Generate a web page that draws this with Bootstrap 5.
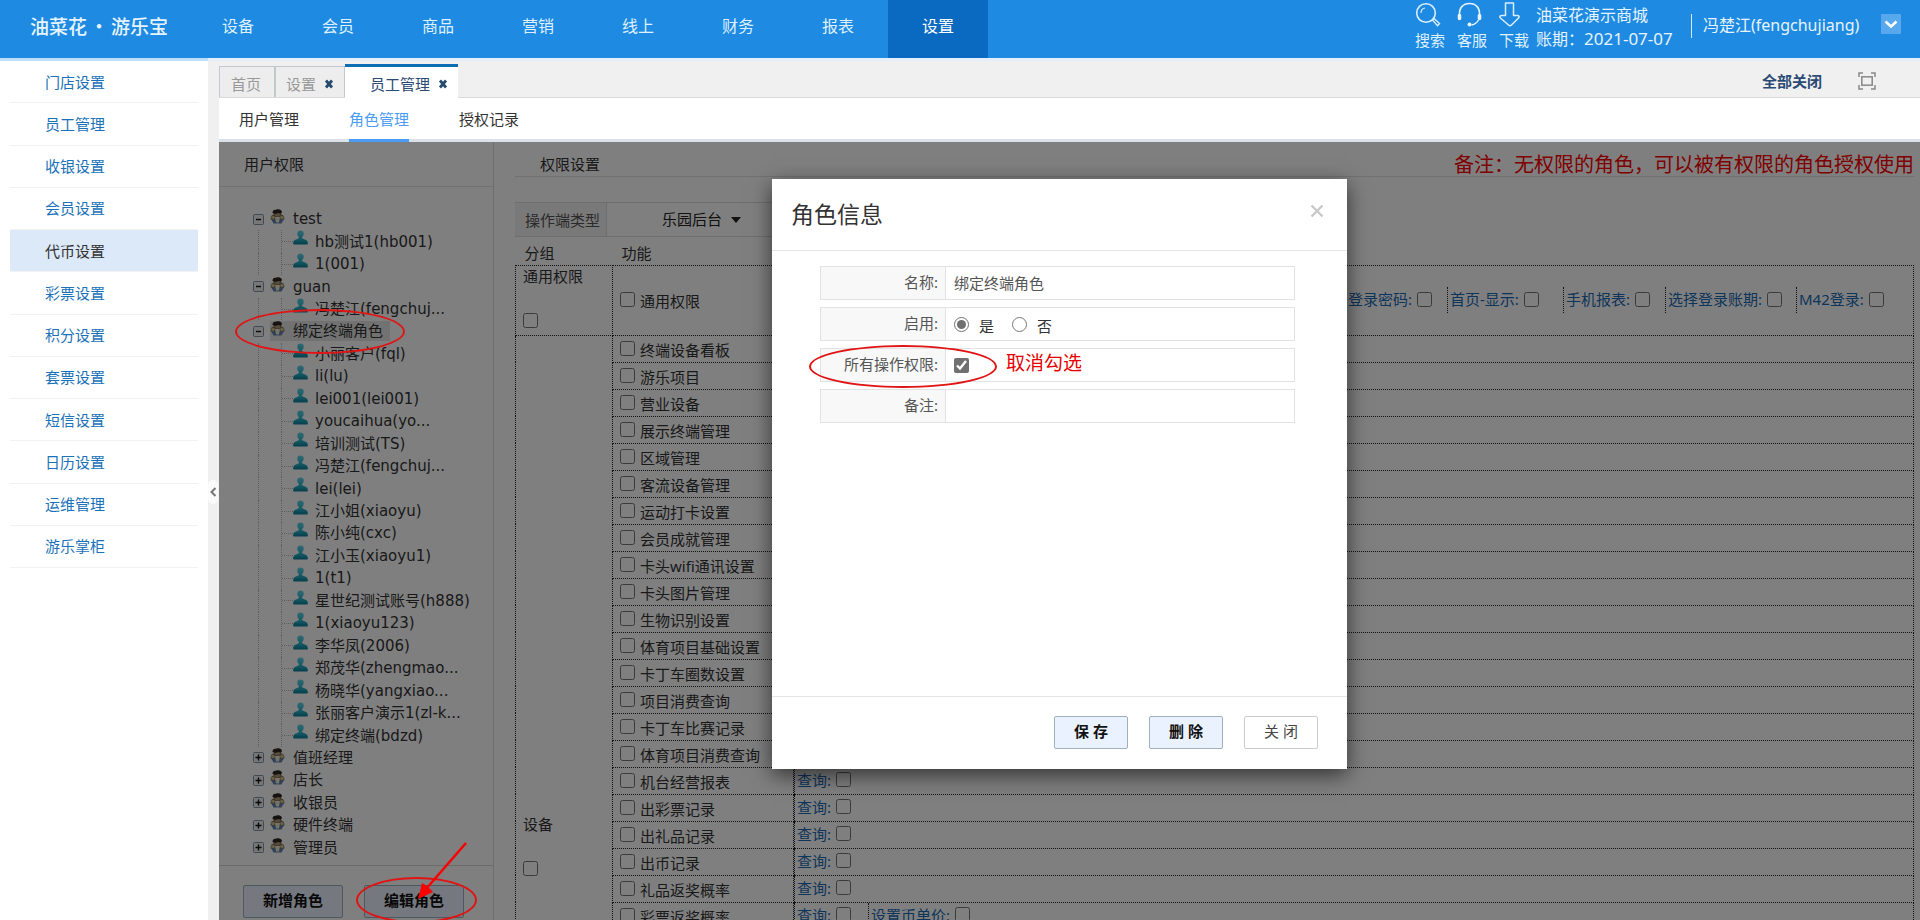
<!DOCTYPE html>
<html lang="zh-CN">
<head>
<meta charset="utf-8">
<meta name="viewport" content="width=device-width, initial-scale=1">
<title>员工管理 - 角色管理</title>
<link href="https://cdn.jsdelivr.net/npm/bootstrap@5.3.0/dist/css/bootstrap.min.css" rel="stylesheet">
<style>
  body { font: 15px/20px "Noto Sans", "Noto Sans CJK SC", sans-serif; color: #333; background: #f0f0f0; }
  a { text-decoration: none; }
  input[type=checkbox], input[type=radio] { width: 15px; height: 15px; margin: 0; flex: none; accent-color: #707070; }

  /* top bar */
  .topbar { height: 58px; background: #1e8ae2; color: #e6f4ff; font-size: 16px; flex: none; }
  .topbar a { color: #dff1ff; }
  .brand { width: 188px; padding-left: 30px; padding-bottom: 6px; font-size: 19px; line-height: 20px; font-weight: 500; font-family: "Noto Sans CJK SC", sans-serif; }
  .brand i { font-style: normal; width: 24px; text-align: center; }
  .mainnav a { width: 100px; text-align: center; line-height: 52px; }
  .mainnav a.current { background: #0a69c0; color: #fff; }
  .tools { padding-top: 2px; }
  .tools > a { width: 42px; font-size: 15px; }
  .tools svg { display: block; margin-bottom: 3px; }
  .shop { width: 155px; padding-top: 4px; line-height: 23px; margin-left: -5px; }
  .shop span { font-size: 17px; }
  .who { border-left: 1px solid #d5e9fa; height: 24px; line-height: 22px; padding-left: 11px; margin-top: 14px; width: 190px; }
  .drop { width: 20px; height: 20px; margin: 14px 19px 0 0; background: #57a8ec; border: 0; border-radius: 1px; }

  /* side menu */
  .sidemenu { width: 208px; border-top: 3px solid #bfe0f8; background: #fff; padding: 0 10px; }
  .sidemenu nav { display: grid; grid-auto-rows: 1fr; height: 507px; }
  .sidemenu a { color: #1b72b8; padding-left: 35px; border-bottom: 1px solid #f2f2f2; }
  .sidemenu a.current { background: #dbe9f9; color: #333; }
  .fold { width: 11px; border-top: 3px solid #e4eff9; }
  .fold button { width: 10px; height: 24px; background: #fafafa; border: 0; border-radius: 5px; margin-top: 419px; }

  /* tabs */
  .tabstrip { height: 40px; border-top: 3px solid #e4eff9; border-bottom: 1px solid #d8dadc; }
  .tabstrip .tab { height: 31px; border: 1px solid #c4c8cc; border-bottom: 0; color: #999; background: #ededed; padding: 3px 10px 0; }
  .tabstrip a.tab { padding: 3px 13px 0 11px; }
  .tabstrip .tab.current { height: 34px; border: 0; border-top: 3px solid #0d6db5; background: #fff; color: #2b4a74; padding: 2px 10px 0 25px; margin-bottom: -1px; }
  .tabstrip .shut { border: 0; background: none; padding: 0; line-height: 10px; }
  .closeall { color: #2b4a74; font-weight: 600; margin-right: 36px; }
  .fullscreen { margin-right: 44px; }
  .subnav { height: 44px; background: #fff; border-bottom: 3px solid #dbe1e8; padding-left: 20px; gap: 50px; }
  .subnav a { color: #333; height: 44px; line-height: 42px; }
  .subnav a.current { color: #4a9cf5; border-bottom: 3px solid #4a9cf5; }

  /* work area */
  .workarea { background: #fff; min-height: 0; }
  .rolepane { width: 275px; border-right: 1px solid #dcdcdc; }
  .rolepane h2 { font-size: 15px; line-height: 20px; padding: 12px 25px; margin: 0; border-bottom: 1px solid #e2e2e2; }
  .tree { display: grid; grid-auto-rows: 1fr; height: 651px; margin: 21px 0 6px 34px; font-family: "DejaVu Sans", "Noto Sans CJK SC", sans-serif; }
  .tree li { display: flex; align-items: center; }
  .tree .kid { border-left: 1px dotted #bbb; margin-left: 5px; padding-left: 22px; }
  .tree .kid::before { content: ""; height: 100%; border-left: 1px dotted #bbb; }
  .tree .twig { width: 11px; border-top: 1px dotted #bbb; }
  .tree .kid > svg { align-self: flex-start; }
  .tree .top { gap: 6px; }
  .tree .top > svg { flex: none; }
  .tree .picked { background: #e4e4e4; }
  .tree .lbl { padding: 0 7px 0 0; line-height: 20px; }
  .tree .kid .lbl { margin-left: 7px; }
  .rolebar { border-top: 1px solid #d5d5d5; padding: 19px 24px; gap: 21px; }
  .act { border: 1px solid #9fb0bf; border-radius: 2px; background: #ebf2ff; color: #111; font-weight: 700; height: 33px; line-height: 20px; padding: 0 0 3px; }
  .rolebar .act { width: 100px; }

  .rightpane { padding: 0 6px 0 21px; min-width: 0; }
  .rightpane h2 { font-size: 15px; line-height: 20px; margin: 0; padding-left: 25px; }
  .rolepane h2, .rightpane h2 { font-weight: 400; }
  .heading { border-bottom: 1px solid #e2e2e2; height: 35px; padding-top: 12px; }
  .hint { color: #f00; font-size: 20px; line-height: 22px; white-space: nowrap; }
  .client { margin-top: 25px; height: 35px; border-top: 1px solid #ddd; border-bottom: 1px solid #ddd; width: 560px; }
  .client label { background: #f3f3f3; width: 92px; padding-left: 10px; border-right: 1px solid #ddd; color: #555; }
  .client select { border: 0; background: none; appearance: none; width: 66px; margin-left: 55px; color: #222; padding: 0 0 2px; }
  .caret { border: 5px solid transparent; border-top: 6px solid #222; border-bottom: 0; margin-left: 3px; }

  .perm { width: 100%; table-layout: fixed; border-collapse: collapse; }
  .perm th { font-weight: 400; height: 28px; padding: 5px 0 1px 9px; line-height: 20px; }
  .perm td { border: 1px dotted #222; padding: 0; height: 27px; }
  .perm td.grp { padding: 0 0 7px 7px; }
  .perm .grp span { display: block; line-height: 20px; margin-bottom: 27px; }
  .perm .grp input { display: block; }
  .perm .fn { display: flex; gap: 5px; padding-left: 7px; height: 26px; }
  .perm .fn input { margin-top: 5px; }
  .perm .fn span { line-height: 20px; padding-top: 4px; }
  .ops { display: flex; color: #1b6bb5; }
  .ops label { display: flex; align-items: center; height: 26px; gap: 5px; padding: 0 0 2px 2px; border-left: 1px dotted #222; white-space: nowrap; }
  .ops .w-query { width: 74px; }
  .ops .w-price { width: 120px; }

  /* dialog */
  .shade { background: rgba(0,0,0,.5); z-index: 1; padding: 37px 20px 0 0; }
  .dialogbox { width: 575px; height: 590px; background: #fff; box-shadow: 0 6px 20px rgba(0,0,0,.6); }
  .dialogbox header { height: 72px; border-bottom: 1px solid #e5e5e5; padding: 0 23px 0 19px; }
  .dialogbox h1 { font-size: 23px; line-height: 30px; margin: 20px 0 0; font-weight: 400; }
  .dialogbox .x { border: 0; background: none; padding: 0; height: 14px; margin: 24px 0 0; line-height: 12px; }
  .dialogbox form { padding: 15px 52px 0 48px; gap: 7px; }
  .frow { height: 34px; border: 1px solid #e2e2e2; }
  .frow > .cap { width: 125px; background: #f8f8f8; border-right: 1px solid #e2e2e2; text-align: right; padding-right: 7px; line-height: 30px; color: #555; }
  .frow > .val { padding: 0 8px; }
  .frow input[type=text] { border: 0; width: 100%; padding: 0 8px 1px; color: #555; outline: 0; }
  .tip { color: #e60000; font-size: 19px; margin-left: 37px; line-height: 20px; padding-bottom: 4px; }
  .dialogbox footer { height: 73px; border-top: 1px solid #e5e5e5; padding: 19px 29px 0 0; gap: 21px; }
  .dialogbox footer .act { width: 74px; }
  .dialogbox footer .plain { background: #fff; font-weight: 400; color: #444; border-color: #ccc; }
  .mark-ring { position: absolute; border: 2px solid #e01414; border-radius: 50%; z-index: 2; pointer-events: none; }
  .ring-tree { left: -18px; top: -11px; width: 170px; height: 45px; }
  .ring-form { left: -12px; top: -4px; width: 188px; height: 43px; }
  .ring-btn { left: -8px; top: -8px; width: 121px; height: 46px; }
  .arrow { position: absolute; left: 50px; top: -44px; z-index: 2; pointer-events: none; }
</style>
</head>
<body class="vh-100 overflow-hidden d-flex flex-column">

<svg width="0" height="0" class="position-absolute">
  <defs>
    <linearGradient id="teal" x1="0" y1="0" x2="0" y2="1"><stop offset="0" stop-color="#62d3e4"/><stop offset=".6" stop-color="#2bb4ca"/><stop offset="1" stop-color="#0b7f96"/></linearGradient>
    <symbol id="user" viewBox="0 0 15 15">
      <path d="M7.500.5a3.200 3.200 0 0 1 3.200 3.300c0 1.500-.7 2.600-1.700 3.200 0 1.500 1.200 1.800 3 2.500 1.700.7 2.800 1.500 2.900 4 0 .6-.4.900-1 .9H1.100c-.6 0-1-.3-1-.9.1-2.500 1.200-3.300 2.900-4C4.800 8.800 6 8.500 6 7 5 6.400 4.300 5.300 4.300 3.800A3.200 3.200 0 0 1 7.500.5z" fill="url(#teal)"/>
    </symbol>
    <symbol id="role" viewBox="0 0 15 15">
      <path d="M1 7 4 5h7l3 2 .5 3-2 2L9 14H6l-3.500-2L.5 10z" fill="#77755e"/>
      <path d="M1.500 10.500h4l2 4H3.500zM13.500 10.500h-4l-2 4h4z" fill="#5f82b4"/>
      <path d="M5 8h5l-1 5.500H6z" fill="#eee6d0"/>
      <circle cx="3" cy="8.500" r="1.800" fill="#d3bd8e"/><circle cx="12" cy="8.500" r="1.800" fill="#d3bd8e"/>
      <circle cx="7.500" cy="4.800" r="2.700" fill="#b89470"/>
      <path d="M2.500 4c0-2 1-3.700 3.500-3.200C8-.2 11.800.3 12 3l-1.200 2-2-1-4 1z" fill="#2a2420"/>
    </symbol>
    <symbol id="minus" viewBox="0 0 11 11"><rect x=".5" y=".5" width="10" height="10" rx="1" fill="#eee" stroke="#8593a5"/><path d="M3 5.500h5" stroke="#111" stroke-width="1.400"/></symbol>
    <symbol id="plus" viewBox="0 0 11 11"><rect x=".5" y=".5" width="10" height="10" rx="1" fill="#eee" stroke="#8593a5"/><path d="M2.500 5.500h6M5.500 2.500v6" stroke="#111" stroke-width="1.400"/></symbol>
    <symbol id="cross" viewBox="0 0 10 10"><path d="M2 1.500 8 8.500M8 1.500 2 8.500" stroke="#244b6e" stroke-width="2.800"/></symbol>
  </defs>
</svg>

<div class="topbar d-flex">
  <div class="brand d-flex align-items-center"><span>油菜花</span><i>·</i><span>游乐宝</span></div>
  <nav class="mainnav d-flex">
    <a href="#">设备</a><a href="#">会员</a><a href="#">商品</a><a href="#">营销</a><a href="#">线上</a><a href="#">财务</a><a href="#">报表</a><a href="#" class="current">设置</a>
  </nav>
  <div class="tools d-flex ms-auto">
    <a href="#"><svg width="26" height="25" viewBox="0 0 26 25" fill="none" stroke="#d8eeff"><circle cx="11" cy="11" r="9.300" stroke-width="1.600"/><path d="M6 11a5 5 0 0 1 4-5" stroke-width="1.200"/><path d="m17.500 18 1.500-1.500 5.500 5-2 2.200z" stroke-width="1.400"/></svg>搜索</a>
    <a href="#"><svg width="26" height="25" viewBox="0 0 26 25" fill="none" stroke="#e6f4ff"><path d="M2.500 13C2 6 6 1.500 12.500 1.500S23 6 22.500 13" stroke-width="1.600"/><path d="M2.500 13.500v3M22.500 13.500v3" stroke-width="3.600" stroke-linecap="round"/><path d="M21.500 18c-1.500 3-4 4.500-7 5" stroke-width="1.400"/><circle cx="12.500" cy="22.500" r="2" fill="#e6f4ff" stroke="none"/></svg>客服</a>
    <a href="#"><svg width="22" height="25" viewBox="0 0 22 25" fill="none" stroke="#d8eeff" stroke-width="1.500" stroke-linejoin="round"><path d="M6.500 1h8v12.500h4c2 0 2 1.500.8 2.800L12.500 23c-.8.800-2.200.8-3 0L1.700 16.300C.5 15 .5 13.500 2.500 13.500h4z"/></svg>下载</a>
  </div>
  <div class="shop">油菜花演示商城<br>账期：<span>2021-07-07</span></div>
  <div class="who">冯楚江(fengchujiang)</div>
  <button class="drop p-0 d-flex align-items-center justify-content-center" aria-label="菜单"><svg width="14" height="9" viewBox="0 0 14 9" fill="none" stroke="#fff" stroke-width="2.600"><path d="m1.500 1.500 5.500 5 5.500-5"/></svg></button>
</div>

<div class="d-flex flex-grow-1" style="min-height:0">
  <aside class="sidemenu flex-shrink-0">
    <nav id="side"></nav>
  </aside>
  <div class="fold flex-shrink-0"><button class="p-0 d-flex align-items-center justify-content-center" aria-label="收起"><svg width="7" height="10" viewBox="0 0 7 10" fill="none" stroke="#777" stroke-width="2"><path d="M5.500 1 1.500 5l4 4"/></svg></button></div>

  <main class="flex-grow-1 d-flex flex-column" style="min-width:0">
    <div class="tabstrip d-flex align-items-end flex-shrink-0">
      <a href="#" class="tab d-flex align-items-center">首页</a>
      <div class="tab d-flex align-items-center gap-2">设置<button class="shut" aria-label="关闭设置"><svg width="10" height="10"><use href="#cross"/></svg></button></div>
      <div class="tab current d-flex align-items-center gap-2">员工管理<button class="shut" aria-label="关闭员工管理"><svg width="10" height="10"><use href="#cross"/></svg></button></div>
      <div class="ms-auto d-flex align-items-center align-self-center pt-1">
        <a href="#" class="closeall">全部关闭</a>
        <svg class="fullscreen" width="18" height="18" viewBox="0 0 18 18" fill="none" stroke="#888" stroke-width="1.500"><path d="M1 5V1h4M13 1h4v4M17 13v4h-4M5 17H1v-4"/><rect x="3.800" y="4.800" width="10.400" height="8.400"/></svg>
      </div>
    </div>
    <nav class="subnav d-flex flex-shrink-0">
      <a href="#">用户管理</a><a href="#" class="current">角色管理</a><a href="#">授权记录</a>
    </nav>

    <div class="workarea flex-grow-1 d-flex position-relative overflow-hidden">
      <section class="rolepane flex-shrink-0">
        <h2>用户权限</h2>
        <ul id="tree" class="tree list-unstyled"></ul>
        <div class="rolebar d-flex">
          <button class="act">新增角色</button>
          <div class="position-relative">
            <button class="act">编辑角色</button>
            <span class="mark-ring ring-btn"></span>
            <svg class="arrow" width="56" height="62" viewBox="0 0 56 62"><path d="M52 2 12 48" stroke="#f00" stroke-width="2.500"/><path d="m4 58 4-16 5 3 6 6z" fill="#f00"/></svg>
          </div>
        </div>
      </section>

      <section class="rightpane flex-grow-1">
        <div class="heading d-flex justify-content-between"><h2>权限设置</h2><div class="hint">备注：无权限的角色，可以被有权限的角色授权使用</div></div>
        <div class="client d-flex align-items-stretch">
          <label for="client" class="d-flex align-items-center">操作端类型</label>
          <select id="client"><option>乐园后台</option></select><span class="caret align-self-center"></span>
        </div>
        <table class="perm">
          <colgroup><col style="width:97px"><col style="width:181px"><col></colgroup>
          <thead><tr><th>分组</th><th>功能</th><th></th></tr></thead>
          <tbody id="perm">
            <tr style="height:69px">
              <td class="grp"><span>通用权限</span><input type="checkbox" aria-label="通用权限分组"></td>
              <td><label class="fn"><input type="checkbox"><span>通用权限</span></label></td>
              <td><div class="ops justify-content-end">
                <label style="width:102px">登录密码:<input type="checkbox"></label>
                <label style="width:116px">首页-显示:<input type="checkbox"></label>
                <label style="width:102px">手机报表:<input type="checkbox"></label>
                <label style="width:131px">选择登录账期:<input type="checkbox"></label>
                <label style="width:117px">M42登录:<input type="checkbox"></label>
              </div></td>
            </tr>
          </tbody>
        </table>
      </section>

      <div class="shade position-absolute top-0 start-0 w-100 h-100 d-flex justify-content-center align-items-start">
        <div class="dialogbox d-flex flex-column" role="dialog" aria-labelledby="dlg">
          <header class="d-flex justify-content-between flex-shrink-0">
            <h1 id="dlg">角色信息</h1>
            <button class="x" aria-label="关闭"><svg width="14" height="14" viewBox="0 0 14 14" stroke="#c8c8c8" stroke-width="2.400"><path d="m1.500 1.500 11 11M12.500 1.500l-11 11"/></svg></button>
          </header>
          <form class="d-flex flex-column flex-grow-1">
            <div class="frow d-flex"><label class="cap flex-shrink-0" for="nm">名称:</label><input id="nm" type="text" value="绑定终端角色"></div>
            <div class="frow d-flex"><span class="cap flex-shrink-0">启用:</span>
              <div class="val d-flex align-items-center">
                <input type="radio" name="on" id="yes" checked><label for="yes" class="pt-1" style="margin:0 18px 0 10px">是</label>
                <input type="radio" name="on" id="no"><label for="no" class="pt-1" style="margin-left:10px">否</label>
              </div></div>
            <div class="frow d-flex position-relative"><label class="cap flex-shrink-0" for="all">所有操作权限:</label>
              <div class="val d-flex align-items-center"><input type="checkbox" id="all" checked><span class="tip">取消勾选</span></div>
              <span class="mark-ring ring-form"></span></div>
            <div class="frow d-flex"><label class="cap flex-shrink-0" for="memo">备注:</label><input id="memo" type="text"></div>
          </form>
          <footer class="d-flex justify-content-end flex-shrink-0">
            <button class="act">保 存</button><button class="act">删 除</button><button class="act plain">关 闭</button>
          </footer>
        </div>
      </div>
    </div>
  </main>
</div>

<script src="https://cdn.jsdelivr.net/npm/bootstrap@5.3.0/dist/js/bootstrap.bundle.min.js"></script>
<script>
  const side = ['门店设置','员工管理','收银设置','会员设置','代币设置','彩票设置','积分设置','套票设置','短信设置','日历设置','运维管理','游乐掌柜'];
  document.getElementById('side').innerHTML = side.map(t =>
    `<a href="#" class="d-flex align-items-center${t === '代币设置' ? ' current' : ''}">${t}</a>`).join('');

  const roles = [
    ['test', ['hb测试1(hb001)','1(001)']],
    ['guan', ['冯楚江(fengchuj...']],
    ['绑定终端角色', ['小丽客户(fql)','li(lu)','lei001(lei001)','youcaihua(yo...','培训测试(TS)','冯楚江(fengchuj...','lei(lei)','江小姐(xiaoyu)','陈小纯(cxc)','江小玉(xiaoyu1)','1(t1)','星世纪测试账号(h888)','1(xiaoyu123)','李华凤(2006)','郑茂华(zhengmao...','杨晓华(yangxiao...','张丽客户演示1(zl-k...','绑定终端(bdzd)']],
    ['值班经理'],['店长'],['收银员'],['硬件终端'],['管理员']
  ];
  document.getElementById('tree').innerHTML = roles.map(([name, kids]) => {
    const on = name === '绑定终端角色';
    return `<li class="top position-relative"><svg width="11" height="11"><use href="#${kids ? 'minus' : 'plus'}"/></svg>
      <span class="d-flex gap-2${on ? ' picked' : ''}"><svg width="15" height="15"><use href="#role"/></svg><span class="lbl">${name}</span></span>
      ${on ? '<span class="mark-ring ring-tree"></span>' : ''}</li>` +
      (kids || []).map(k => `<li class="kid"><span class="twig"></span><svg width="15" height="15"><use href="#user"/></svg><span class="lbl">${k}</span></li>`).join('');
  }).join('');

  const fns = ['终端设备看板','游乐项目','营业设备','展示终端管理','区域管理','客流设备管理','运动打卡设置','会员成就管理','卡头wifi通讯设置','卡头图片管理','生物识别设置','体育项目基础设置','卡丁车圈数设置','项目消费查询','卡丁车比赛记录','体育项目消费查询','机台经营报表','出彩票记录','出礼品记录','出币记录','礼品返奖概率','彩票返奖概率'];
  document.getElementById('perm').insertAdjacentHTML('beforeend', fns.map((f, i) => `<tr>
    ${i ? '' : `<td class="grp" rowspan="${fns.length + 1}"><span>设备</span><input type="checkbox" aria-label="设备分组"></td>`}
    <td><label class="fn"><input type="checkbox"><span>${f}</span></label></td>
    <td>${i < 16 ? '' : `<div class="ops"><label class="w-query">查询:<input type="checkbox"></label>${f === '彩票返奖概率' ? '<label class="w-price">设置币单价:<input type="checkbox"></label>' : ''}</div>`}</td></tr>`).join('') +
    '<tr style="height:432px"><td></td><td></td></tr>');
</script>
</body>
</html>
